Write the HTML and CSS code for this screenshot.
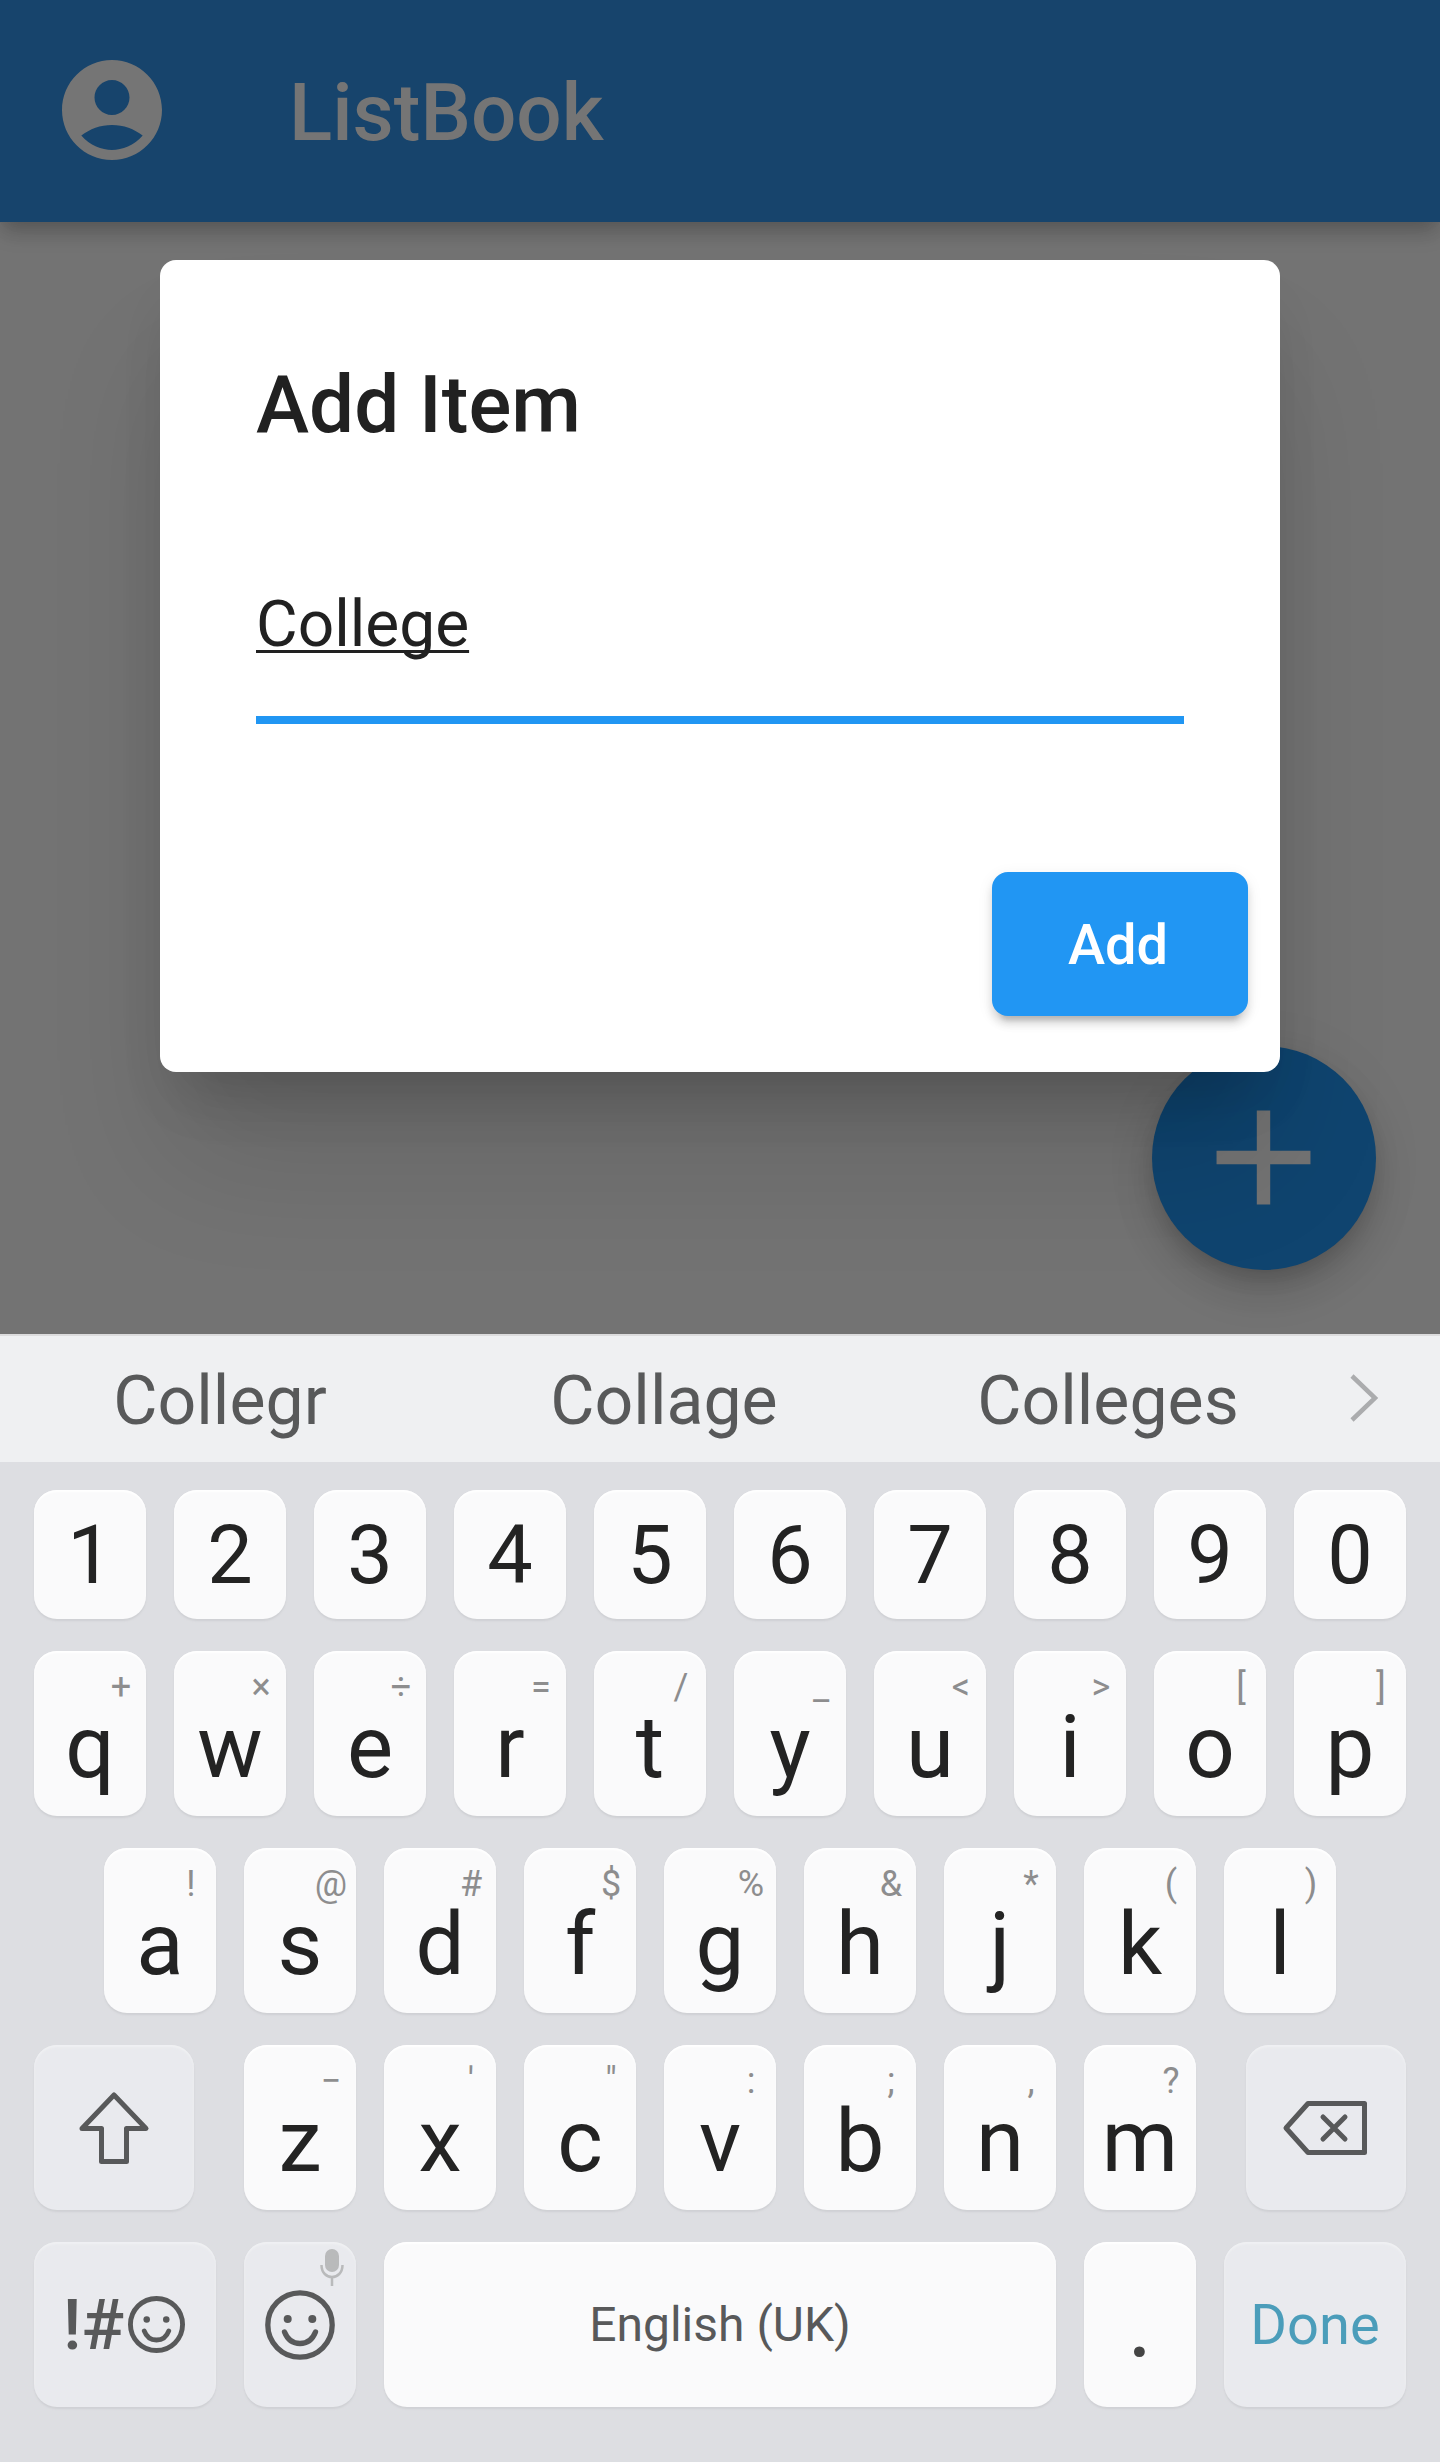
FILE: index.html
```html
<!DOCTYPE html>
<html lang="en">
<head>
<meta charset="utf-8">
<title>ListBook</title>
<link rel="stylesheet" href="styles.css">
</head>
<body>
<main class="screen">
  <header class="app-bar">
    <svg class="account" viewBox="0 0 24 24"><path fill="currentColor" d="M12 2C6.48 2 2 6.48 2 12s4.48 10 10 10 10-4.48 10-10S17.52 2 12 2zm0 4c1.930 0 3.500 1.570 3.500 3.500S13.930 13 12 13s-3.500-1.570-3.500-3.500S10.070 6 12 6zm0 14c-2.030 0-4.430-.82-6.140-2.880C7.550 15.800 9.680 15 12 15s4.450.8 6.140 2.120C16.430 19.180 14.030 20 12 20z"/></svg>
    <h1 class="app-title">ListBook</h1>
  </header>
  <div class="fab"><svg viewBox="0 0 24 24"><path fill="currentColor" d="M19 13h-6v6h-2v-6H5v-2h6V5h2v6h6v2z"/></svg></div>
  <section class="dialog">
    <h2 class="dialog-title">Add Item</h2>
    <div class="field"><span class="field-text">College</span></div>
    <div class="actions"><button class="add-button">Add</button></div>
  </section>
</main>
<section class="keyboard">
  <div class="suggestions">
    <span class="word">Collegr</span><span class="word">Collage</span><span class="word">Colleges</span>
    <svg class="more" viewBox="0 0 32 52"><path d="M4 4l23 22L4 48"/></svg>
  </div>
  <div class="keys">
    <div class="row numbers">
      <div class="key">1</div><div class="key">2</div><div class="key">3</div><div class="key">4</div><div class="key">5</div><div class="key">6</div><div class="key">7</div><div class="key">8</div><div class="key">9</div><div class="key">0</div>
    </div>
    <div class="row">
      <div class="key"><span class="hint">+</span><span class="char">q</span></div>
      <div class="key"><span class="hint">×</span><span class="char">w</span></div>
      <div class="key"><span class="hint">÷</span><span class="char">e</span></div>
      <div class="key"><span class="hint">=</span><span class="char">r</span></div>
      <div class="key"><span class="hint">/</span><span class="char">t</span></div>
      <div class="key"><span class="hint">_</span><span class="char">y</span></div>
      <div class="key"><span class="hint">&lt;</span><span class="char">u</span></div>
      <div class="key"><span class="hint">&gt;</span><span class="char">i</span></div>
      <div class="key"><span class="hint">[</span><span class="char">o</span></div>
      <div class="key"><span class="hint">]</span><span class="char">p</span></div>
    </div>
    <div class="row">
      <div class="key"><span class="hint">!</span><span class="char">a</span></div>
      <div class="key"><span class="hint">@</span><span class="char">s</span></div>
      <div class="key"><span class="hint">#</span><span class="char">d</span></div>
      <div class="key"><span class="hint">$</span><span class="char">f</span></div>
      <div class="key"><span class="hint">%</span><span class="char">g</span></div>
      <div class="key"><span class="hint">&amp;</span><span class="char">h</span></div>
      <div class="key"><span class="hint">*</span><span class="char">j</span></div>
      <div class="key"><span class="hint">(</span><span class="char">k</span></div>
      <div class="key"><span class="hint">)</span><span class="char">l</span></div>
    </div>
    <div class="row spread">
      <div class="key func wide"><svg class="shift" viewBox="0 0 76 78"><path d="M38 6L70 39.500H50.500V72.500H25.500V39.500H6z"/></svg></div>
      <div class="letters">
        <div class="key"><span class="hint">−</span><span class="char">z</span></div>
        <div class="key"><span class="hint">'</span><span class="char">x</span></div>
        <div class="key"><span class="hint">"</span><span class="char">c</span></div>
        <div class="key"><span class="hint">:</span><span class="char">v</span></div>
        <div class="key"><span class="hint">;</span><span class="char">b</span></div>
        <div class="key"><span class="hint">,</span><span class="char">n</span></div>
        <div class="key"><span class="hint">?</span><span class="char">m</span></div>
      </div>
      <div class="key func wide"><svg class="backspace" viewBox="0 0 90 58"><path d="M27 4.500H83.500V53.500H27L5 29z"/><path d="M42 18L64 40M64 18L42 40"/></svg></div>
    </div>
    <div class="row">
      <div class="key func symbols"><span class="symbols-text">!#</span><svg class="face-small" viewBox="0 0 70 70"><circle cx="35" cy="35" r="32"/><path d="M20 43Q24 54 35 54T50 43"/><circle class="eye" cx="23" cy="29" r="4"/><circle class="eye" cx="47" cy="29" r="4"/></svg></div>
      <div class="key func emoji">
        <svg class="mic" viewBox="0 0 24 37"><rect x="5" y="0" width="14" height="23" rx="7"/><path d="M1.500 16C1.500 32 22.500 32 22.500 16M12 28V37"/></svg>
        <svg class="face" viewBox="0 0 70 70"><circle cx="35" cy="35" r="32.200"/><path d="M19.500 42Q24 53.500 35 53.500T50.500 42"/><circle class="eye" cx="22.700" cy="29" r="4"/><circle class="eye" cx="47.300" cy="29" r="4"/></svg>
      </div>
      <div class="key space">English (UK)</div>
      <div class="key period">.</div>
      <div class="key func done">Done</div>
    </div>
  </div>
</section>
</body>
</html>
```
FILE: styles.css
```css
* { box-sizing: border-box; }
body { margin: 0; width: 1440px; font-family: Roboto, sans-serif; background: #dddee2; }
h1, h2 { margin: 0; font-weight: 500; }
svg { display: block; flex: none; }

.screen { position: relative; height: 1334px; background: #737373; overflow: hidden; }
.app-bar {
  position: relative; z-index: 1;
  height: 222px; padding: 0 52px 2px; display: flex; align-items: center; gap: 117px;
  background: #17446c; color: #757575;
  box-shadow: 0 8px 16px -4px rgba(0,0,0,.14), 0 14px 20px -2px rgba(0,0,0,.12), 0 4px 30px rgba(0,0,0,.04);
}
.account { width: 120px; height: 120px; }
.app-title { font-size: 80px; line-height: 94px; padding-top: 6px; }

.fab {
  position: absolute; left: 1152px; top: 1046px; width: 224px; height: 224px; border-radius: 50%;
  display: flex; align-items: center; justify-content: center;
  background: #0f446f; color: #737373;
  box-shadow: 0 12px 20px -4px rgba(0,0,0,.14), 0 24px 40px rgba(0,0,0,.12), 0 4px 60px rgba(0,0,0,.06);
}
.fab svg { width: 161px; height: 161px; margin: 0 1px 1px 0; }

.dialog {
  position: absolute; z-index: 2; left: 160px; top: 260px; width: 1120px; height: 812px;
  padding: 96px 32px 56px 96px; border-radius: 16px; background: #fff; color: #212121;
  display: flex; flex-direction: column;
  box-shadow: 0 44px 60px -28px rgba(0,0,0,.14), 0 96px 130px -12px rgba(0,0,0,.12), 0 36px 60px -8px rgba(0,0,0,.05);
}
.dialog-title { font-size: 80px; line-height: 98px; }
.field { width: 928px; height: 270px; border-bottom: 8px solid #2196f3; display: flex; align-items: flex-end; padding-bottom: 53px; }
.field-text { font-size: 64px; line-height: 76px; text-decoration: underline; text-decoration-skip-ink: none; text-decoration-thickness: 3px; text-underline-offset: 4px; }
.actions { margin-top: auto; display: flex; justify-content: flex-end; }
.add-button {
  width: 256px; height: 144px; border: 0; border-radius: 16px; padding: 2px 4px 0 0;
  background: #2196f3; color: #fff; font: 500 56px Roboto, sans-serif;
  box-shadow: 0 12px 4px -8px rgba(0,0,0,.14), 0 8px 8px rgba(0,0,0,.12), 0 4px 16px rgba(0,0,0,.08);
}

.suggestions {
  height: 128px; display: flex; align-items: center; background: #eff0f2; color: #58595a;
  border-top: 2px solid #dcdcdd;
}
.word { width: 444px; text-align: center; font-size: 68px; line-height: 80px; padding: 4px 4px 0 0; }
.more { width: 32px; height: 52px; margin: 0 0 2px 16px; fill: none; stroke: #abacae; stroke-width: 4.500; }

.keys { height: 1000px; padding: 28px 34px 0; display: flex; flex-direction: column; gap: 32px; background: #dddee2; }
.row { height: 165px; display: flex; justify-content: center; gap: 28px; }
.row.spread { justify-content: space-between; }
.letters { display: flex; gap: 28px; }
.key {
  width: 112px; height: 165px; flex: none; display: flex; flex-direction: column; align-items: center;
  border-radius: 23px; background: #fafafb; color: #232323;
  box-shadow: 0 2px 2px #cfd0d4, inset 0 2px 2px #fff;
}
.numbers { height: 129px; }
.numbers .key { height: 129px; font-size: 81px; line-height: 131px; }
.hint { align-self: flex-end; width: 48px; padding-right: 2px; text-align: center; font-size: 36px; line-height: 72px; color: #8d8d8e; }
.char { font-size: 87px; line-height: 49px; }
.func { background: #e9eaee; box-shadow: 0 2px 2px #cfd0d4, inset 0 2px 2px #f0f1f3; color: #58595a; justify-content: center; }
.func svg { fill: none; stroke: #58595a; stroke-width: 5; stroke-linejoin: round; stroke-linecap: round; }
.wide { width: 160px; }
.shift { width: 76px; height: 78px; }
.backspace { width: 90px; height: 58px; }
.symbols { width: 182px; flex-direction: row; align-items: center; padding: 0 2px 0 0; }
.symbols-text { font-size: 71px; font-weight: 500; line-height: 84px; }
.func .face-small { width: 57px; height: 57px; margin-left: 4px; stroke-width: 6; }
.func .face { width: 70px; height: 70px; stroke-width: 5.300; }
.func .eye { fill: #58595a; stroke: none; }
.emoji { justify-content: flex-start; }
.func .mic { width: 24px; height: 37px; margin: 7px 12px 4px 0; align-self: flex-end; stroke: #b9babb; stroke-width: 2.500; stroke-linecap: butt; }
.mic rect { fill: #b9babb; stroke: none; }
.space { width: 672px; font-size: 48px; line-height: 165px; color: #58595a; }
.period { font-size: 96px; line-height: 162px; color: #444; }
.done { width: 182px; font-size: 56px; color: #4b9dba; }
```
